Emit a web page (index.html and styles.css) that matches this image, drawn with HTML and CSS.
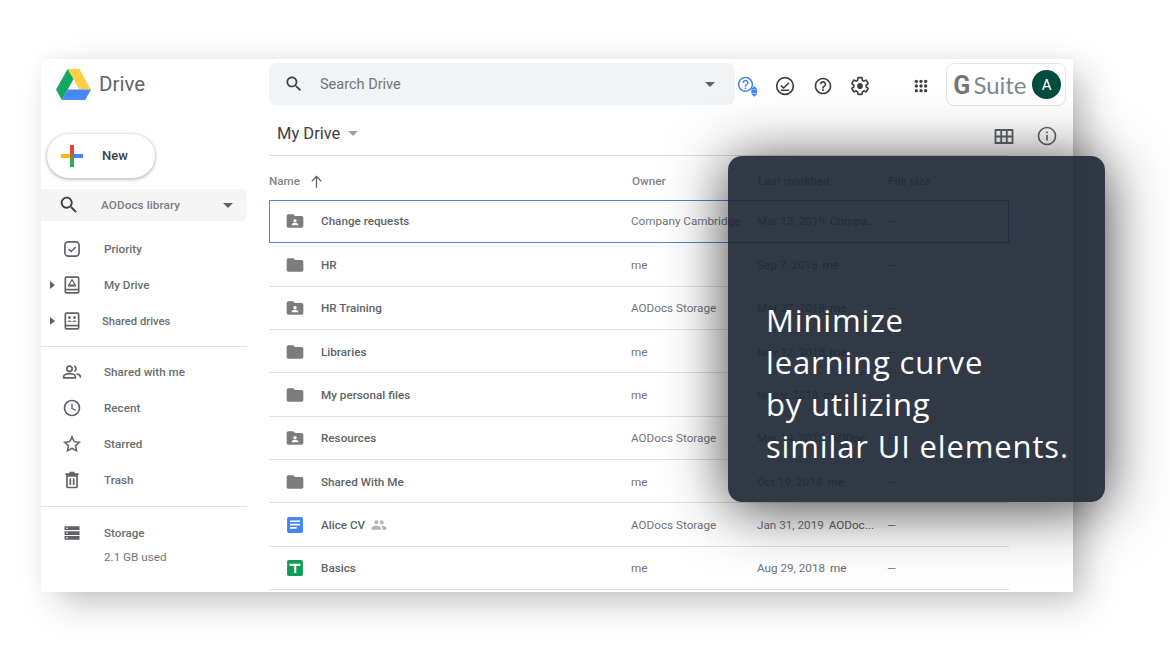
FILE: index.html
```html
<!DOCTYPE html>
<html lang="en">
<head>
    <meta charset="UTF-8">
    <meta name="viewport" content="width=device-width, initial-scale=1.0">
    <title>Drive</title>
    <link rel="stylesheet" href="styles.css">
</head>
<body>
    <!-- shared icons -->
    <svg class="sprite" xmlns="http://www.w3.org/2000/svg">
        <symbol id="i-search" viewBox="0 0 24 24"><path d="M15.5 14h-.79l-.28-.27C15.41 12.59 16 11.11 16 9.5 16 5.91 13.09 3 9.5 3S3 5.91 3 9.5 5.91 16 9.5 16c1.61 0 3.09-.59 4.23-1.57l.27.28v.79l5 4.99L20.49 19l-4.99-5zm-6 0C7.01 14 5 11.99 5 9.5S7.01 5 9.5 5 14 7.01 14 9.5 11.99 14 9.5 14z"/></symbol>
        <symbol id="i-help" viewBox="0 0 24 24"><path d="M11 18h2v-2h-2v2zm1-16C6.48 2 2 6.48 2 12s4.48 10 10 10 10-4.48 10-10S17.52 2 12 2zm0 18c-4.41 0-8-3.59-8-8s3.59-8 8-8 8 3.59 8 8-3.59 8-8 8zm0-14c-2.21 0-4 1.79-4 4h2c0-1.1.9-2 2-2s2 .9 2 2c0 2-3 1.75-3 5h2c0-2.25 3-2.5 3-5 0-2.21-1.79-4-4-4z"/></symbol>
        <symbol id="i-folder" viewBox="0 0 24 24"><path d="M10 4H4c-1.1 0-1.99.9-1.99 2L2 18c0 1.1.9 2 2 2h16c1.1 0 2-.9 2-2V8c0-1.1-.9-2-2-2h-8l-2-2z"/></symbol>
        <symbol id="i-shared" viewBox="0 0 24 24"><path fill-rule="evenodd" d="M10 4H4c-1.1 0-1.99.9-1.99 2L2 18c0 1.1.9 2 2 2h16c1.1 0 2-.9 2-2V8c0-1.1-.9-2-2-2h-8l-2-2zM12 9.5a2 2 0 1 1 0 4 2 2 0 0 1 0-4zM8 17v-.8c0-1.3 2.7-2 4-2s4 .7 4 2v.8H8z"/></symbol>
        <symbol id="i-people" viewBox="0 0 24 24"><path d="M16 11c1.66 0 2.99-1.34 2.99-3S17.66 5 16 5s-3 1.34-3 3 1.34 3 3 3zm-8 0c1.66 0 2.99-1.34 2.99-3S9.66 5 8 5 5 6.34 5 8s1.34 3 3 3zm0 2c-2.33 0-7 1.17-7 3.5V19h14v-2.5C15 14.17 10.33 13 8 13zm8 0c-.29 0-.62.02-.97.05 1.16.84 1.97 1.97 1.97 3.45V19h6v-2.5c0-2.33-4.67-3.5-7-3.5z"/></symbol>
    </svg>

    <div class="window">
        <aside class="sidebar">
            <div class="logo">
                <svg class="logo-mark" viewBox="0 0 35 31">
                    <polygon fill="#ffcf48" points="11.7,0 23.3,0 35,20.5 23.3,20.5"/>
                    <polygon fill="#11a861" points="11.7,0 17.5,10.2 5.8,31 0,20.5"/>
                    <polygon fill="#4688f4" points="11.7,20.5 35,20.5 29.2,31 5.8,31"/>
                </svg>
                <span class="logo-text">Drive</span>
            </div>

            <button class="new-btn">
                <svg class="new-plus" viewBox="0 0 22 22">
                    <rect x="9" y="0" width="4" height="9" fill="#ea4335"/>
                    <rect x="13" y="9" width="9" height="4" fill="#4285f4"/>
                    <rect x="9" y="13" width="4" height="9" fill="#34a853"/>
                    <rect x="0" y="9" width="9" height="4" fill="#fbbc05"/>
                    <rect x="9" y="9" width="4" height="4" fill="#b0703c"/>
                </svg>
                <span class="new-label">New</span>
            </button>

            <div class="library">
                <svg class="icon library-search"><use href="#i-search"/></svg>
                <span class="library-name">AODocs library</span>
                <span class="caret"></span>
            </div>

            <nav class="nav">
                <div class="nav-item">
                    <svg class="nav-icon" viewBox="0 0 24 24"><rect x="3.5" y="3.5" width="17" height="17" rx="4" fill="none" stroke="#5f6368" stroke-width="2"/><path d="M8 12l3 3 5.5-5.5" fill="none" stroke="#5f6368" stroke-width="1.8"/></svg>
                    <span>Priority</span>
                </div>
                <div class="nav-item">
                    <span class="arrow"></span>
                    <svg class="nav-icon" viewBox="0 0 24 24"><rect x="4" y="2.5" width="16" height="19" rx="1.5" fill="none" stroke="#5f6368" stroke-width="2"/><rect x="4" y="16.5" width="16" height="2" fill="#5f6368"/><path d="M12 5.5l4 6.5H8z" fill="none" stroke="#5f6368" stroke-width="1.5"/><rect x="7.5" y="12" width="9" height="2" fill="#5f6368"/></svg>
                    <span>My Drive</span>
                </div>
                <div class="nav-item nav-small">
                    <span class="arrow"></span>
                    <svg class="nav-icon" viewBox="0 0 24 24"><rect x="4" y="2.5" width="16" height="19" rx="1.5" fill="none" stroke="#5f6368" stroke-width="2"/><rect x="4" y="16.5" width="16" height="2" fill="#5f6368"/><circle cx="9" cy="8" r="1.6" fill="#5f6368"/><circle cx="15" cy="8" r="1.6" fill="#5f6368"/><path d="M6.5 13c0-2 5-2 5 0zM12.5 13c0-2 5-2 5 0z" fill="#5f6368"/></svg>
                    <span>Shared drives</span>
                </div>
            </nav>
            <nav class="nav nav-group">
                <div class="nav-item">
                    <svg class="nav-icon" viewBox="0 0 24 24"><g fill="none" stroke="#5f6368" stroke-width="2"><circle cx="9" cy="8" r="3.2"/><path d="M2 19v-1.5C2 15 6.5 14 9 14s7 1 7 3.5V19z"/><path d="M14.5 4.9a3.2 3.2 0 0 1 0 6.2M17.5 14.2c2.2.5 4.5 1.5 4.5 3.3V19"/></g></svg>
                    <span>Shared with me</span>
                </div>
                <div class="nav-item">
                    <svg class="nav-icon" viewBox="0 0 24 24"><circle cx="12" cy="12" r="9" fill="none" stroke="#5f6368" stroke-width="2"/><path d="M12 6.5v6l4.5 2.5" fill="none" stroke="#5f6368" stroke-width="1.6"/></svg>
                    <span>Recent</span>
                </div>
                <div class="nav-item">
                    <svg class="nav-icon" viewBox="0 0 24 24"><path d="M12 3.5l2.6 5.7 6.2.7-4.6 4.2 1.3 6.1L12 17.1l-5.5 3.1 1.3-6.1-4.6-4.2 6.2-.7z" fill="none" stroke="#5f6368" stroke-width="1.8"/></svg>
                    <span>Starred</span>
                </div>
                <div class="nav-item">
                    <svg class="nav-icon" viewBox="0 0 24 24"><path d="M6 7h12v13a1 1 0 0 1-1 1H7a1 1 0 0 1-1-1z" fill="none" stroke="#5f6368" stroke-width="2"/><path d="M4 5h16M9 3h6" stroke="#5f6368" stroke-width="2"/><path d="M10 10v8M14 10v8" stroke="#5f6368" stroke-width="2"/></svg>
                    <span>Trash</span>
                </div>
            </nav>
            <div class="storage">
                <div class="nav-item">
                    <svg class="nav-icon" viewBox="0 0 24 24"><path fill="#5f6368" d="M3 4h18v4.5H3zM3 9.8h18v4.5H3zM3 15.5h18V20H3z"/><g fill="#fff"><rect x="5" y="5.6" width="2" height="1.3"/><rect x="5" y="11.4" width="2" height="1.3"/><rect x="5" y="17.1" width="2" height="1.3"/></g></svg>
                    <span>Storage</span>
                </div>
                <div class="storage-used">2.1 GB used</div>
            </div>
        </aside>

        <main class="main">
            <header class="topbar">
                <div class="search">
                    <svg class="icon search-icon"><use href="#i-search"/></svg>
                    <span class="search-text">Search Drive</span>
                    <span class="caret"></span>
                </div>
                <div class="tools">
                    <svg class="tool tool-blue" viewBox="0 0 24 24"><use href="#i-help" fill="#4285f4" x="-2" y="-1" width="22" height="22"/><path d="M19.5 12l3.5 3.5h-7zM19.5 25L16 21.5h7z" fill="#4285f4"/><rect x="16" y="16" width="7" height="5" fill="#4285f4"/></svg>
                    <svg class="tool" viewBox="0 0 24 24"><circle cx="12" cy="12" r="10" fill="none" stroke="#3c4043" stroke-width="2"/><path d="M7 11.5l3.3 2.8 6.5-6.3M7 17h10" fill="none" stroke="#3c4043" stroke-width="1.8"/></svg>
                    <svg class="tool" viewBox="0 0 24 24"><use href="#i-help" fill="#3c4043"/></svg>
                    <svg class="tool" viewBox="0 0 24 24"><path fill="none" stroke="#3c4043" stroke-width="2" stroke-linejoin="round" d="M19.43 12.98c.04-.32.07-.64.07-.98s-.03-.66-.07-.98l2.11-1.65c.19-.15.24-.42.12-.64l-2-3.46c-.12-.22-.39-.3-.61-.22l-2.49 1c-.52-.4-1.08-.73-1.69-.98l-.38-2.65C14.46 2.18 14.25 2 14 2h-4c-.25 0-.46.18-.49.42l-.38 2.65c-.61.25-1.17.59-1.69.98l-2.49-1c-.23-.09-.49 0-.61.22l-2 3.46c-.13.22-.07.49.12.64l2.11 1.65c-.04.32-.07.65-.07.98s.03.66.07.98l-2.11 1.65c-.19.15-.24.42-.12.64l2 3.46c.12.22.39.3.61.22l2.49-1c.52.4 1.08.73 1.69.98l.38 2.65c.03.24.24.42.49.42h4c.25 0 .46-.18.49-.42l.38-2.65c.61-.25 1.17-.59 1.69-.98l2.49 1c.23.09.49 0 .61-.22l2-3.46c.12-.22.07-.49-.12-.64l-2.11-1.65z"/><circle cx="12" cy="12" r="3.5" fill="#3c4043"/></svg>
                    <svg class="tool tool-apps" viewBox="0 0 24 24" fill="#3c4043"><circle cx="5" cy="5" r="2.5"/><circle cx="12" cy="5" r="2.5"/><circle cx="19" cy="5" r="2.5"/><circle cx="5" cy="12" r="2.5"/><circle cx="12" cy="12" r="2.5"/><circle cx="19" cy="12" r="2.5"/><circle cx="5" cy="19" r="2.5"/><circle cx="12" cy="19" r="2.5"/><circle cx="19" cy="19" r="2.5"/></svg>
                </div>
                <div class="gsuite">
                    <span class="gsuite-name"><b>G</b> Suite</span>
                    <span class="avatar">A</span>
                </div>
            </header>

            <div class="crumbs">
                <span class="crumb-title">My Drive</span>
                <span class="caret caret-small"></span>
                <div class="view-tools">
                    <svg class="view-icon" viewBox="0 0 24 24"><path fill="none" stroke="#5f6368" stroke-width="1.8" d="M3.5 6h17v13h-17zM3.5 12.5h17M9.2 6v13M14.8 6v13"/></svg>
                    <svg class="view-icon" viewBox="0 0 24 24"><circle cx="12" cy="12" r="8.5" fill="none" stroke="#5f6368" stroke-width="1.6"/><path fill="#5f6368" d="M11.2 11h1.6v5.5h-1.6zM11.2 7.5h1.6v1.8h-1.6z"/></svg>
                </div>
            </div>

            <div class="table">
                <div class="row row-head">
                    <div class="cell-name">Name <span class="sort-arrow">
                        <svg viewBox="0 0 24 24"><path d="M12 22V4M4.5 11.5L12 4l7.5 7.5" fill="none" stroke="#5f6368" stroke-width="2"/></svg>
                    </span></div>
                    <div>Owner</div>
                    <div>Last modified</div>
                    <div>File size</div>
                </div>

                <div class="row row-selected">
                    <div class="cell-name"><svg class="file-icon"><use href="#i-shared"/></svg>Change requests</div>
                    <div>Company Cambridge</div>
                    <div class="cell-date">Mar 13, 2019 <span>Compa...</span></div>
                    <div>—</div>
                </div>
                <div class="row">
                    <div class="cell-name"><svg class="file-icon"><use href="#i-folder"/></svg>HR</div>
                    <div>me</div>
                    <div class="cell-date">Sep 7, 2018 <span>me</span></div>
                    <div>—</div>
                </div>
                <div class="row">
                    <div class="cell-name"><svg class="file-icon"><use href="#i-shared"/></svg>HR Training</div>
                    <div>AODocs Storage</div>
                    <div class="cell-date">Mar 27, 2019 <span>me</span></div>
                    <div>—</div>
                </div>
                <div class="row">
                    <div class="cell-name"><svg class="file-icon"><use href="#i-folder"/></svg>Libraries</div>
                    <div>me</div>
                    <div class="cell-date">Nov 12, 2018 <span>me</span></div>
                    <div>—</div>
                </div>
                <div class="row">
                    <div class="cell-name"><svg class="file-icon"><use href="#i-folder"/></svg>My personal files</div>
                    <div>me</div>
                    <div class="cell-date">Nov 9, 2018 <span>me</span></div>
                    <div>—</div>
                </div>
                <div class="row">
                    <div class="cell-name"><svg class="file-icon"><use href="#i-shared"/></svg>Resources</div>
                    <div>AODocs Storage</div>
                    <div class="cell-date">Mar 14, 2019 <span>AODoc...</span></div>
                    <div>—</div>
                </div>
                <div class="row">
                    <div class="cell-name"><svg class="file-icon"><use href="#i-folder"/></svg>Shared With Me</div>
                    <div>me</div>
                    <div class="cell-date">Oct 19, 2018 <span>me</span></div>
                    <div>—</div>
                </div>
                <div class="row">
                    <div class="cell-name">
                        <svg class="file-icon" viewBox="0 0 24 24"><rect x="2.5" y="2.5" width="19" height="19" rx="2" fill="#4285f4"/><path fill="#fff" d="M6 6.5h12v2H6zM6 10.5h12v2H6zM6 14.5h8v2H6z"/></svg>Alice CV
                        <svg class="share-icon"><use href="#i-people"/></svg>
                    </div>
                    <div>AODocs Storage</div>
                    <div class="cell-date">Jan 31, 2019 <span>AODoc...</span></div>
                    <div>—</div>
                </div>
                <div class="row">
                    <div class="cell-name"><svg class="file-icon" viewBox="0 0 24 24"><rect x="2.5" y="2.5" width="19" height="19" rx="2" fill="#0f9d58"/><path fill="#fff" d="M5.5 7h13v2.5h-5V18H11V9.5H5.5z"/></svg>Basics</div>
                    <div>me</div>
                    <div class="cell-date">Aug 29, 2018 <span>me</span></div>
                    <div>—</div>
                </div>
            </div>
        </main>
    </div>

    <div class="callout">
        <p>Minimize<br>learning curve<br>by utilizing<br>similar UI elements.</p>
    </div>
</body>
</html>
```

FILE: styles.css
```css
* {
    box-sizing: border-box;
}

html, body {
    margin: 0;
    height: 650px;
    overflow: hidden;
}

body {
    position: relative;
    padding: 59px 97px 58px 41px;
    background-color: #fff;
    font-family: Roboto, "Liberation Sans", sans-serif;
    font-size: 12px;
    color: #5f6368;
}

.sprite {
    display: none;
}

.window {
    display: flex;
    height: 533px;
    overflow: hidden;
    background-color: #fff;
    box-shadow: 14px 12px 34px -4px rgba(0, 0, 0, .28), 0 -2px 10px rgba(0, 0, 0, .03);
}

/* sidebar */
.sidebar {
    width: 206px;
    flex-shrink: 0;
}

.logo {
    display: flex;
    align-items: center;
    height: 50px;
    padding: 0 0 0 15px;
}

.logo-mark {
    width: 35px;
    height: 31px;
}

.logo-text {
    margin-left: 8px;
    font-size: 20.5px;
    color: #5f6368;
}

.new-btn {
    display: flex;
    align-items: center;
    width: 108px;
    height: 44px;
    margin: 25px 0 0 6px;
    padding: 0 0 0 14px;
    border: none;
    border-radius: 22px;
    background-color: #fff;
    box-shadow: 0 1px 3px 1px rgba(60, 64, 67, .3);
    font-family: inherit;
    font-size: 13px;
    font-weight: 500;
    color: #3c4043;
}

.new-plus {
    width: 22px;
    height: 22px;
    margin-right: 19px;
}

.new-label {
    margin-top: -2px;
}

.library {
    display: flex;
    align-items: center;
    height: 32px;
    margin-top: 11px;
    padding-left: 17px;
    border-radius: 0 6px 6px 0;
    background-color: #f5f5f5;
}

.icon {
    width: 22px;
    height: 22px;
    fill: #3c4043;
}

.library-name {
    flex: 1;
    margin-left: 21px;
    font-weight: 500;
    font-size: 11.7px;
    letter-spacing: .1px;
    color: #7a7e83;
}

.caret {
    width: 0;
    height: 0;
    margin-right: 14px;
    border-left: 5px solid transparent;
    border-right: 5px solid transparent;
    border-top: 5px solid #5f6368;
}

.nav {
    padding: 10px 0 7px;
    border-bottom: 1px solid #e3e3e6;
}

.nav-group {
    padding: 7px 0 8px;
}

.nav-item {
    position: relative;
    display: flex;
    align-items: center;
    height: 36px;
    padding-left: 21px;
    font-size: 11.7px;
    font-weight: 500;
    color: #6a6e73;
}

.nav-icon {
    width: 20px;
    height: 20px;
    margin-right: 22px;
}

.nav-small {
    font-size: 11.2px;
}

.nav-small span:last-child {
    margin-left: -2px;
}

.arrow {
    position: absolute;
    left: 9px;
    border-top: 4px solid transparent;
    border-bottom: 4px solid transparent;
    border-left: 5px solid #5f6368;
}

.storage {
    padding-top: 8px;
}

.storage-used {
    margin: -1px 0 0 63px;
    font-size: 11.7px;
    color: #70757a;
}

/* main column */
.main {
    flex: 1;
    padding-left: 22px;
}

.topbar {
    display: flex;
    padding-top: 4px;
}

.search {
    display: flex;
    align-items: center;
    width: 466px;
    height: 42px;
    padding-left: 15px;
    border-radius: 8px;
    background-color: #f1f3f4;
}

.search-icon {
    width: 20px;
    height: 20px;
}

.search-text {
    flex: 1;
    margin-left: 16px;
    font-size: 14.5px;
    color: #70757a;
}

.search .caret {
    margin-right: 20px;
}

.tools {
    display: flex;
    align-items: center;
    gap: 17.3px;
    margin: 3px 0 0 3px;
}

.tool {
    width: 20px;
    height: 20px;
    overflow: visible;
}

.tool-apps {
    width: 16px;
    height: 16px;
    margin-left: 26px;
}

.gsuite {
    display: flex;
    align-items: center;
    width: 120px;
    height: 43px;
    margin-left: 17px;
    padding-left: 6px;
    border: 1px solid #e3e5e8;
    border-radius: 8px;
}

.gsuite-name {
    flex: 1;
    font-family: Lato, sans-serif;
    font-size: 24px;
    color: #80868b;
    white-space: nowrap;
}

.gsuite-name b {
    margin-right: -3px;
    font-family: Roboto, sans-serif;
    font-size: 25px;
    color: #757575;
}

.avatar {
    display: flex;
    align-items: center;
    justify-content: center;
    width: 29px;
    height: 29px;
    margin-right: 4px;
    border-radius: 50%;
    background-color: #004d40;
    font-size: 15px;
    color: #fff;
}

.crumbs {
    display: flex;
    align-items: center;
    width: 740px;
    height: 50px;
    padding: 6px 0 0 8px;
    border-bottom: 1px solid #dadce0;
}

.crumb-title {
    font-size: 16.5px;
    color: #3c4043;
}

.caret-small {
    margin-left: 8px;
    border-top-color: #9aa0a6;
}

.view-tools {
    display: flex;
    gap: 19px;
    margin: 4px -50px 0 auto;
}

.view-icon {
    width: 24px;
    height: 24px;
}

/* file table */
.table {
    width: 740px;
}

.row {
    display: grid;
    grid-template-columns: 362px 126px 130px 1fr;
    align-items: center;
    height: 43.33px;
    padding-top: 1px;
    border-bottom: 1px solid #e0e0e0;
    font-size: 11.7px;
    color: #70757a;
}

.row-head {
    grid-template-columns: 363px 126px 130px 1fr;
    height: 44px;
    padding-top: 6px;
    border-bottom: none;
    font-weight: 500;
    color: #80868b;
}

.row-head .cell-name {
    padding-left: 0;
    color: #80868b;
}

.row-selected {
    grid-template-columns: 361px 126px 130px 1fr;
    padding: 0 0 1px;
    border: 1px solid #4a86d8;
}

.row-selected .cell-name {
    padding-left: 15px;
}

.cell-name {
    display: flex;
    align-items: center;
    padding-left: 16px;
    font-weight: 500;
    color: #5f6368;
}

.sort-arrow {
    display: flex;
    margin-left: 9px;
}

.sort-arrow svg {
    width: 15px;
    height: 15px;
}

.file-icon {
    width: 20px;
    height: 20px;
    margin-right: 16px;
    fill: #7c7c7c;
}

.share-icon {
    width: 16px;
    height: 16px;
    margin-left: 6px;
    fill: #b0b3b8;
}

.cell-date span {
    margin-left: 2px;
    color: #5f6368;
}

/* overlay card */
.callout {
    position: absolute;
    left: 728px;
    top: 156px;
    display: flex;
    align-items: flex-end;
    width: 377px;
    height: 346px;
    padding: 0 0 35px 38px;
    border-radius: 14px;
    background-color: rgba(27, 36, 50, .9);
    box-shadow: 0 6px 60px rgba(0, 0, 0, .75);
}

.callout p {
    margin: 0;
    font-family: "Open Sans", sans-serif;
    font-size: 31px;
    line-height: 42px;
    letter-spacing: .85px;
    color: #fff;
    white-space: nowrap;
}
```
